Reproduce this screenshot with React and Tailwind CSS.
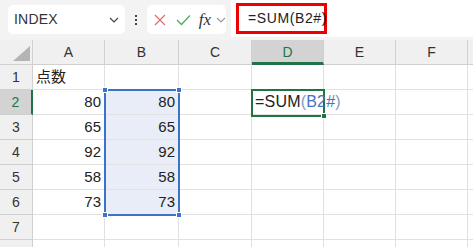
import React from 'react';

const cols = [
  { key: 'A', w: 'w-[72px]' },
  { key: 'B', w: 'w-[74px]' },
  { key: 'C', w: 'w-[73px]' },
  { key: 'D', w: 'w-[72px]' },
  { key: 'E', w: 'w-[72px]' },
  { key: 'F', w: 'w-[72px]' },
];

const scores = [80, 65, 92, 58, 73];

const Chevron = ({ className }) => (
  <svg className={className} width="10" height="6" viewBox="0 0 10 6" fill="none">
    <path d="M1 1l4 4 4-4" stroke="currentColor" strokeWidth="1.2" />
  </svg>
);

const Toolbar = () => (
  <div className="flex h-[40px] items-start bg-[#f3f3f3] pt-[5px]">
    <div className="ml-[8px] flex h-[29px] w-[117px] items-center justify-between rounded-[5px] bg-white pl-[6px] pr-[6px]">
      <span className="text-[14px] tracking-[0.2px] text-[#333]">INDEX</span>
      <Chevron className="text-[#444]" />
    </div>
    <div className="flex h-[29px] w-[22px] flex-col items-center justify-center gap-[2px]">
      <span className="h-[2px] w-[2px] bg-[#444]" />
      <span className="h-[2px] w-[2px] bg-[#444]" />
      <span className="h-[2px] w-[2px] bg-[#444]" />
    </div>
    <div className="flex h-[29px] w-[79px] items-center rounded-[5px] bg-white pl-[6px]">
      <svg width="12" height="12" viewBox="0 0 12 12" className="ml-[1px]">
        <path d="M1 1l10 10M11 1L1 11" stroke="#e06c6c" strokeWidth="1.2" />
      </svg>
      <svg width="15" height="12" viewBox="0 0 15 12" className="ml-[10px]">
        <path d="M1 6l4.5 4.5L14 1.5" stroke="#4fae5a" strokeWidth="1.3" fill="none" />
      </svg>
      <span className="ml-[8px] font-['Liberation_Serif',serif] text-[17px] italic leading-none text-[#333]">
        fx
      </span>
      <Chevron className="ml-[5px] text-[#999]" />
    </div>
    <div className="ml-[5px] -mt-[5px] flex h-[37px] flex-1 items-center bg-white pl-[5px]">
      <div className="flex h-[31px] w-[91px] items-center border-[3px] border-[#ee0000] pl-[9px] text-[14px] tracking-[0.6px] text-[#222]">
        =SUM(B2#)
      </div>
    </div>
  </div>
);

const HeaderRow = () => (
  <div className="flex h-[25px] bg-[#f0f0f0]">
    <div className="relative w-[33px] border-b border-r border-[#d0d0d0]">
      <svg className="absolute left-[13px] top-[6px]" width="17" height="15" viewBox="0 0 17 15">
        <path d="M17 0V15H0Z" fill="#b4b4b4" />
      </svg>
    </div>
    {cols.map((c) => (
      <div
        key={c.key}
        className={`${c.w} flex items-center justify-center border-r text-[14px] ${
          c.key === 'D'
            ? 'border-b-[3px] border-b-[#217346] border-r-[#d0d0d0] bg-[#d3d3d3] pt-[2px] text-[#217346]'
            : 'border-b border-[#d0d0d0] text-[#333]'
        }`}
      >
        {c.key}
      </div>
    ))}
    <div className="flex-1 border-b border-[#d0d0d0]" />
  </div>
);

const Row = ({ n, label = true }) => {
  const score = n >= 2 && n <= 6 ? scores[n - 2] : null;
  const sel = n === 2;
  return (
    <div className="flex h-[25px]">
      <div
        className={`flex w-[33px] items-center justify-center border-b border-[#d0d0d0] text-[14px] ${
          sel ? 'border-r-[2px] border-r-[#217346] bg-[#d3d3d3] text-[#217346]' : 'border-r border-r-[#d0d0d0] bg-[#f0f0f0] text-[#333]'
        }`}
      >
        {label ? n : null}
      </div>
      {cols.map((c) => {
        let content = null;
        let extra = '';
        if (c.key === 'A' && n === 1) content = <span className="pl-[3px]">点数</span>;
        if ((c.key === 'A' || c.key === 'B') && score !== null)
          content = <span className="ml-auto pr-[3px]">{score}</span>;
        if (c.key === 'B' && score !== null) extra = 'bg-[#e8edf7]';
        if (c.key === 'D' && n === 2)
          content = (
            <span className="relative z-10 whitespace-nowrap pl-[3px] text-[16px] tracking-[0.2px]">
              =SUM<span className="text-[#7f97c4]">(</span>
              <span className="text-[#4472c4]">B2#</span>
              <span className="text-[#7f97c4]">)</span>
            </span>
          );
        return (
          <div
            key={c.key}
            className={`${c.w} ${extra} flex items-center overflow-visible border-b border-r border-[#e1e1e1] text-[15px] text-[#222]`}
          >
            {content}
          </div>
        );
      })}
      <div className="flex-1 border-b border-[#e1e1e1]" />
    </div>
  );
};

export default function App() {
  return (
    <div className="h-[247px] w-[473px] overflow-hidden bg-white font-['Liberation_Sans','Noto_Sans_CJK_JP',sans-serif]">
      <Toolbar />
      <HeaderRow />
      <div className="relative">
        {[1, 2, 3, 4, 5, 6, 7].map((n) => (
          <Row key={n} n={n} />
        ))}
        <Row n={8} label={false} />
        {/* selection B2:B6 */}
        <div className="pointer-events-none absolute left-[104px] top-[24px] h-[127px] w-[76px] border-[2px] border-[#3c73c8]">
          <span className="absolute -left-[4px] -top-[4px] h-[6px] w-[6px] border border-white bg-[#3c73c8]" />
          <span className="absolute -right-[4px] -top-[4px] h-[6px] w-[6px] border border-white bg-[#3c73c8]" />
          <span className="absolute -bottom-[4px] -left-[4px] h-[6px] w-[6px] border border-white bg-[#3c73c8]" />
          <span className="absolute -bottom-[4px] -right-[4px] h-[6px] w-[6px] border border-white bg-[#3c73c8]" />
        </div>
        {/* active cell D2 */}
        <div className="pointer-events-none absolute left-[251px] top-[24px] h-[28px] w-[74px] border-[2px] border-[#217346]">
          <span className="absolute -bottom-[4px] -right-[4px] h-[6px] w-[6px] border border-white bg-[#217346]" />
        </div>
      </div>
    </div>
  );
}
